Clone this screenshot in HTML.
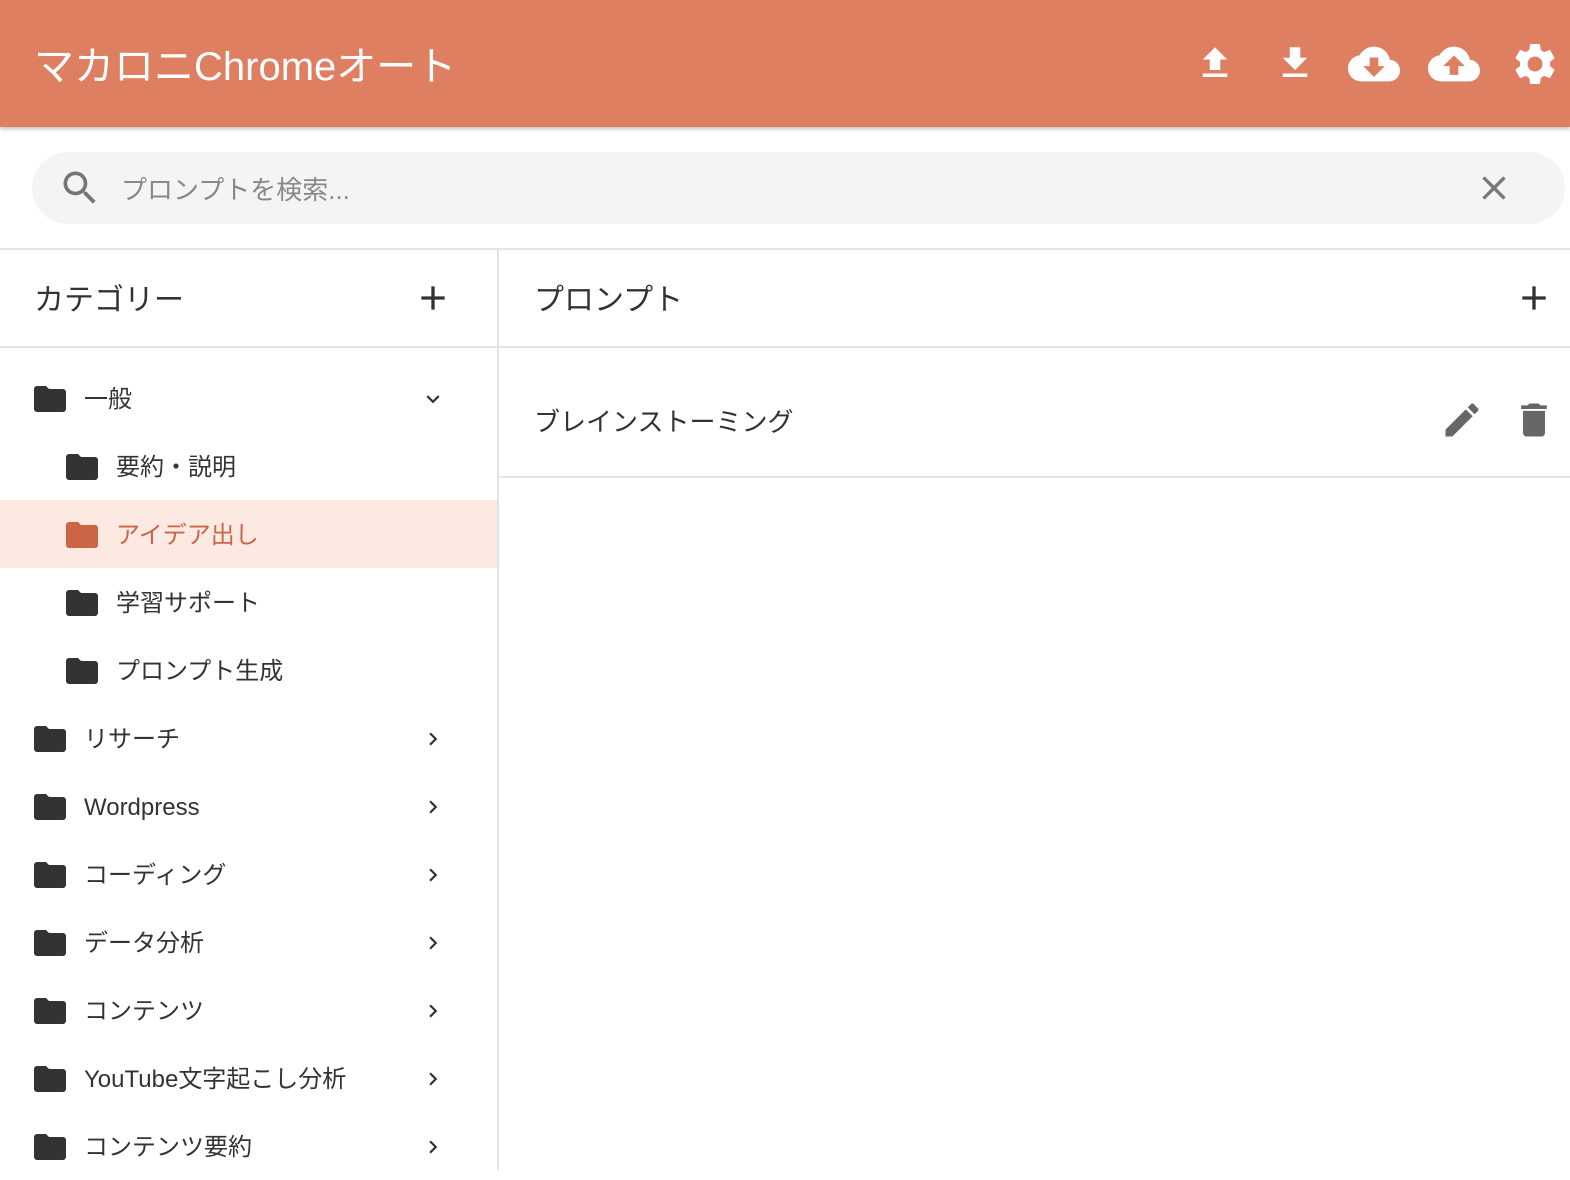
<!DOCTYPE html>
<html><head><meta charset="utf-8"><style>
body{margin:0;width:1570px;height:1170px;overflow:hidden;background:#fff;font-family:"Liberation Sans","Noto Sans CJK JP",sans-serif;color:#333;position:relative}
.hdr{position:absolute;left:0;top:0;width:1570px;height:127px;background:#df7f62;box-shadow:0 2px 4px rgba(0,0,0,.25)}
.title{position:absolute;left:34px;top:39px;font-size:40px;color:#fff;line-height:56px}
.ic{position:absolute;fill:#fff}
.search{position:absolute;left:32px;top:152px;width:1533px;height:72px;background:#f4f4f4;border-radius:36px}
.ph{position:absolute;left:121px;top:172px;font-size:26px;color:#888;line-height:36px}
.hl{position:absolute;left:0;top:248px;width:1570px;height:2px;background:#e4e4e4}
.vl{position:absolute;left:497px;top:250px;width:2px;height:920px;background:#e4e4e4}
.h2{position:absolute;font-size:30px;line-height:40px;color:#333}
.row{position:absolute;left:0;width:497px;height:68px}
.row .fd{position:absolute;top:22px;width:32px;height:26px}
.row .fd svg{display:block}
.row span{position:absolute;top:16px;font-size:24px;line-height:40px}
.row .ch{position:absolute;left:420px;top:22px}
</style></head><body>
<div class="hdr"></div>
<div class="title">マカロニChromeオート</div>
<svg class="ic" style="left:1194px;top:42px" width="42" height="42" viewBox="0 0 24 24"><path d="M9 16h6v-6h4l-7-7-7 7h4zm-4 2h14v2H5z"/></svg>
<svg class="ic" style="left:1274px;top:42px" width="42" height="42" viewBox="0 0 24 24"><path d="M19 9h-4V3H9v6H5l7 7 7-7zM5 18v2h14v-2H5z"/></svg>
<svg class="ic" style="left:1348px;top:38px" width="52" height="52" viewBox="0 0 24 24"><path d="M19.35 10.04C18.67 6.59 15.64 4 12 4 9.110 4 6.6 5.64 5.35 8.04 2.34 8.36 0 10.91 0 14c0 3.31 2.69 6 6 6h13c2.76 0 5-2.24 5-5 0-2.64-2.05-4.78-4.650-4.96zM17 13l-5 5-5-5h3V9h4v4h3z"/></svg>
<svg class="ic" style="left:1428px;top:38px" width="52" height="52" viewBox="0 0 24 24"><path d="M19.35 10.04C18.67 6.59 15.64 4 12 4 9.11 4 6.6 5.64 5.35 8.04 2.34 8.36 0 10.91 0 14c0 3.31 2.69 6 6 6h13c2.76 0 5-2.24 5-5 0-2.64-2.05-4.78-4.65-4.96zM14 13v4h-4v-4H7l5-5 5 5h-3z"/></svg>
<svg class="ic" style="left:1510px;top:39px" width="50" height="50" viewBox="0 0 24 24"><path d="M19.14 12.94c.04-.3.06-.61.06-.94 0-.32-.02-.64-.07-.94l2.03-1.58a.49.49 0 0 0 .12-.61l-1.92-3.32a.488.488 0 0 0-.59-.22l-2.39.96c-.5-.38-1.03-.7-1.62-.94l-.36-2.54a.484.484 0 0 0-.48-.41h-3.84c-.24 0-.43.17-.47.41l-.36 2.54c-.59.24-1.13.57-1.62.94l-2.39-.96c-.22-.08-.47 0-.59.22L2.74 8.87c-.12.21-.08.47.12.61l2.03 1.58c-.05.3-.09.63-.09.94s.02.64.07.94l-2.03 1.58a.49.49 0 0 0-.12.61l1.92 3.32c.12.22.37.29.59.22l2.39-.96c.5.38 1.03.7 1.62.94l.36 2.54c.05.24.24.41.48.41h3.84c.24 0 .44-.17.47-.41l.36-2.54c.59-.24 1.13-.56 1.62-.94l2.39.96c.22.08.47 0 .59-.22l1.92-3.32c.12-.22.07-.47-.12-.61l-2.01-1.58zM12 15.6c-1.98 0-3.6-1.62-3.6-3.6s1.62-3.6 3.6-3.6 3.6 1.62 3.6 3.6-1.62 3.6-3.6 3.6z"/></svg>
<div class="search"></div>
<svg style="position:absolute;left:58px;top:166px" width="44" height="44" viewBox="0 0 24 24" fill="#757575"><path d="M15.5 14h-.79l-.28-.27A6.47 6.470 0 0 0 16 9.5 6.5 6.5 0 1 0 9.5 16c1.61 0 3.09-.59 4.23-1.57l.27.28v.79l5 4.99L20.49 19l-4.99-5zm-6 0C7.01 14 5 11.99 5 9.5S7.01 5 9.5 5 14 7.01 14 9.5 11.99 14 9.5 14z"/></svg>
<div class="ph">プロンプトを検索...</div>
<svg style="position:absolute;left:1474px;top:168px" width="40" height="40" viewBox="0 0 24 24" fill="#777"><path d="M19 6.41 17.59 5 12 10.59 6.41 5 5 6.41 10.59 12 5 17.59 6.41 19 12 13.41 17.59 19 19 17.59 13.41 12z"/></svg>
<div class="hl"></div>
<div class="vl"></div>
<div class="h2" style="left:34px;top:281px">カテゴリー</div>
<svg style="position:absolute;left:413px;top:278px" width="40" height="40" viewBox="0 0 24 24" fill="#333"><path d="M19 13h-6v6h-2v-6H5v-2h6V5h2v6h6v2z"/></svg>
<div class="h2" style="left:534px;top:281px">プロンプト</div>
<svg style="position:absolute;left:1514px;top:278px" width="40" height="40" viewBox="0 0 24 24" fill="#333"><path d="M19 13h-6v6h-2v-6H5v-2h6V5h2v6h6v2z"/></svg>
<div style="position:absolute;left:0;top:346px;width:1570px;height:2px;background:#e4e4e4"></div>
<div style="position:absolute;left:499px;top:476px;width:1071px;height:2px;background:#e4e4e4"></div>
<div style="position:absolute;left:534px;top:402px;font-size:26px;line-height:40px">ブレインストーミング</div>
<svg style="position:absolute;left:1440px;top:398px" width="44" height="44" viewBox="0 0 24 24" fill="#666"><path d="M3 17.25V21h3.75L17.81 9.94l-3.75-3.75L3 17.25zM20.71 7.04a1 1 0 0 0 0-1.41l-2.34-2.34a1 1 0 0 0-1.41 0l-1.83 1.83 3.75 3.75 1.83-1.83z"/></svg>
<svg style="position:absolute;left:1512px;top:398px" width="44" height="44" viewBox="0 0 24 24" fill="#666"><path d="M6 19c0 1.1.9 2 2 2h8c1.1 0 2-.9 2-2V7H6v12zM19 4h-3.5l-1-1h-5l-1 1H5v2h14V4z"/></svg>
<div id="rows"></div>
<script>
const F='<svg width="32" height="26" viewBox="0 0 32 26"><path d="M3 0h9l3 3h14a3 3 0 0 1 3 3v17a3 3 0 0 1-3 3H3a3 3 0 0 1-3-3V3a3 3 0 0 1 3-3z" fill="COL"/></svg>';
const items=[["一般",0,"d"],["要約・説明",1],["アイデア出し",1,null,1],["学習サポート",1],["プロンプト生成",1],["リサーチ",0,"r"],["Wordpress",0,"r"],["コーディング",0,"r"],["データ分析",0,"r"],["コンテンツ",0,"r"],["YouTube文字起こし分析",0,"r"],["コンテンツ要約",0,"r"]];
let h='';items.forEach((it,i)=>{const top=364+i*68;const x=it[1]?66:34;const sel=it[3];
const col=sel?'#cc6548':'#333';
h+=`<div class="row" style="top:${top}px;${sel?'background:#fbe9e2;':''}"><div class="fd" style="left:${x}px">${F.replace('COL',col)}</div><span style="left:${x+50}px;color:${col}">${it[0]}</span>`;
if(it[2]=='d')h+='<svg class="ch" width="26" height="26" viewBox="0 0 24 24" fill="#333"><path d="M7.41 8.59 12 13.17l4.59-4.58L18 10l-6 6-6-6z"/></svg>';
if(it[2]=='r')h+='<svg class="ch" width="26" height="26" viewBox="0 0 24 24" fill="#333"><path d="M8.59 16.59 13.17 12 8.59 7.41 10 6l6 6-6 6z"/></svg>';
h+='</div>';});
document.getElementById('rows').innerHTML=h;
</script>
</body></html>
